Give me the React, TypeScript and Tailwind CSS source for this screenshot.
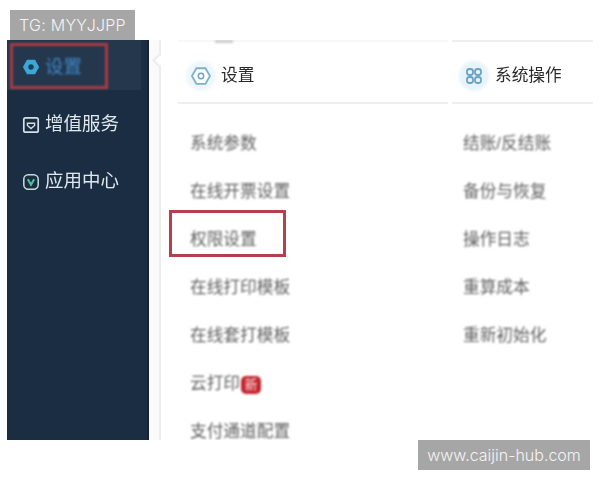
import React from "react";

const cjk = "font-['Liberation_Sans','Noto_Sans_CJK_SC',sans-serif]";
const label = "bg-[#a6a6a6] text-[#f4f4f4] text-base font-light flex items-center justify-center leading-none font-['Inter','Liberation_Sans',sans-serif]";

function Item({ children }: { children: React.ReactNode }) {
  return <div className="h-12 flex items-center pt-px text-[16.7px] leading-none text-[#5f5f5f] blur-[0.8px] whitespace-nowrap">{children}</div>;
}

function Hex() {
  return (
    <svg width="34" height="34" viewBox="0 0 34 34" fill="none">
      <circle cx="17" cy="17" r="15" fill="#eef7fb" className="blur-[1.5px]" />
      <path d="M11.500 7.500h11L28 17l-5.500 9.500h-11L6 17z" transform="translate(3 3.100) scale(.82)" stroke="#7fb0c8" strokeWidth="2.200" fill="#fbfdfe" className="blur-[0.4px]" />
      <circle cx="17" cy="17" r="2.700" stroke="#6fa3bd" strokeWidth="1.400" className="blur-[0.3px]" />
    </svg>
  );
}

function Grid4() {
  return (
    <svg width="34" height="34" viewBox="0 0 34 34" fill="none">
      <circle cx="17" cy="17" r="15" fill="#e8f3fa" className="blur-[1.5px]" />
      <g stroke="#6ba3c6" strokeWidth="1.800" className="blur-[0.4px]">
        <rect x="10" y="10" width="6" height="6" rx="2.500" />
        <rect x="18" y="10" width="6" height="6" rx="2.500" />
        <rect x="10" y="18" width="6" height="6" rx="2.500" />
        <rect x="18" y="18" width="6" height="6" rx="2.500" />
      </g>
    </svg>
  );
}

export default function App() {
  return (
    <div className={`w-[600px] h-[480px] bg-white flex flex-col overflow-hidden ${cjk}`}>
      <div className="h-10 pt-[10px] pl-[10px] flex">
        <div className={`w-[125px] h-[30px] tracking-[0.25px] ${label}`}>TG: MYYJJPP</div>
      </div>

      <div className="relative w-[586px] h-[400px] ml-[7px] flex overflow-hidden">
        <div className="w-[142px] bg-[#1b2d42] border-r-2 border-[#14243a] flex flex-col shrink-0">
          <div className="w-[134px] h-[50px] bg-[#25374c] flex items-center pl-[15px] gap-[5px] pt-[4px]">
            <svg width="18" height="18" viewBox="0 0 20 20" className="blur-[0.5px]">
              <path d="M5.500 2h9L19 10l-4.500 8h-9L1 10z" fill="#3ca6d6" />
              <circle cx="10" cy="10" r="3" fill="#164058" />
            </svg>
            <span className="text-[18.500px] leading-none text-[#3f87c8] blur-[0.8px]">设置</span>
          </div>
          <div className="h-[57px] mt-[6px] flex items-center pl-[15px] gap-[5px]">
            <svg width="18" height="18" viewBox="0 0 20 20" fill="none" stroke="#d5e0e6" strokeWidth="1.900" className="blur-[0.4px]">
              <rect x="2" y="2" width="16" height="16" rx="2" />
              <path d="M6 8h8v2.500L10 14l-4-3.500z" strokeWidth="1.500" />
            </svg>
            <span className="text-[18.500px] leading-none text-[#dfe8ed] blur-[0.7px] whitespace-nowrap">增值服务</span>
          </div>
          <div className="h-[57px] flex items-center pl-[15px] gap-[5px]">
            <svg width="18" height="18" viewBox="0 0 20 20" fill="none" className="blur-[0.4px]">
              <rect x="2" y="2" width="16" height="16" rx="5" stroke="#bfe0d6" strokeWidth="1.700" />
              <path d="M6.500 7l3.500 6 3.500-6" stroke="#4fc39a" strokeWidth="2.400" />
            </svg>
            <span className="text-[18.500px] leading-none text-[#dfe8ed] blur-[0.7px] whitespace-nowrap">应用中心</span>
          </div>
        </div>

        <div className="w-[12px] bg-[#fafafa] border-r-2 border-[#ededed] shrink-0" />

        <div className="w-[270px] ml-[17px] flex flex-col shrink-0 border-t-2 border-[#f8f8f8]">
          <div className="h-[62px] border-b-2 border-[#efefef] flex items-center pl-[6px] gap-[3px] pt-[8px] shrink-0">
            <Hex />
            <span className="text-[16.7px] leading-none text-[#2a2a2a] blur-[0.7px]">设置</span>
          </div>
          <div className="pl-[12px] pt-[16px] flex flex-col">
            <Item>系统参数</Item>
            <Item>在线开票设置</Item>
            <Item>权限设置</Item>
            <Item>在线打印模板</Item>
            <Item>在线套打模板</Item>
            <Item>
              云打印
              <span className="w-[20px] h-[18px] ml-px bg-[#c2222e] rounded-[5px] text-[#ffe6df] text-[13px] flex items-center justify-center leading-none">新</span>
            </Item>
            <Item>支付通道配置</Item>
          </div>
        </div>

        <div className="w-[141px] ml-[4px] flex flex-col shrink-0 border-t-2 border-[#efefef]">
          <div className="h-[62px] border-b-2 border-[#efefef] flex items-center pl-[5px] gap-[4px] pt-[8px] shrink-0">
            <Grid4 />
            <span className="text-[16.7px] leading-none text-[#2a2a2a] blur-[0.7px] whitespace-nowrap">系统操作</span>
          </div>
          <div className="pl-[11px] pt-[16px] flex flex-col">
            <Item>结账/反结账</Item>
            <Item>备份与恢复</Item>
            <Item>操作日志</Item>
            <Item>重算成本</Item>
            <Item>重新初始化</Item>
          </div>
        </div>

        <div className="absolute left-[147px] top-[16px] w-[9px] h-[9px] rotate-45 bg-white border-l-2 border-b-2 border-[#ececec] blur-[0.5px]" />
        <div className="absolute left-[208px] top-0 w-[18px] h-[3px] bg-[#c9ccca] blur-[1px]" />
        <div className="absolute left-[3px] top-[3px] w-[98px] h-[46px] border-[3px] border-[#a83c44] blur-[0.8px]" />
        <div className="absolute left-[162px] top-[170px] w-[117px] h-[47px] border-[3px] border-[#b5404a] blur-[0.7px]" />
      </div>

      <div className="h-[30px] w-[590px] flex justify-end">
        <div className={`w-[172px] h-[30px] ${label}`}>www.caijin-hub.com</div>
      </div>
    </div>
  );
}
